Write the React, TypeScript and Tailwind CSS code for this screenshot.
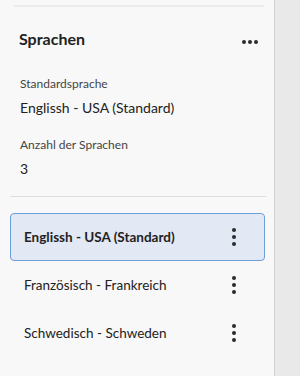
import React from "react";

const Kebab = () => (
  <div className="flex flex-col items-center gap-[3px] w-[10px]">
    <span className="block w-[4px] h-[4px] rounded-full bg-[#2c2c2c]" />
    <span className="block w-[4px] h-[4px] rounded-full bg-[#2c2c2c]" />
    <span className="block w-[4px] h-[4px] rounded-full bg-[#2c2c2c]" />
  </div>
);

export default function App() {
  const font = { fontFamily: "Lato, 'Open Sans', sans-serif" };
  return (
    <div className="w-[300px] h-[376px] flex bg-[#e9e9e9] overflow-hidden" style={font}>
      <div className="w-[275px] h-full bg-[#f8f8f8] border-r border-[#d0d0d0] flex flex-col">
        <div className="h-[5px]" />
        <div className="h-[2px] bg-[#ebebeb] ml-[14px] mr-[10px]" />
        <div className="h-[62px] flex items-center justify-between pl-[19px] pr-[16px] pt-[2px]">
          <span className="text-[16px] font-bold text-[#222]">Sprachen</span>
          <div className="flex gap-[2px] items-center mt-[5px]">
            <span className="block w-[4px] h-[4px] rounded-full bg-[#2c2c2c]" />
            <span className="block w-[4px] h-[4px] rounded-full bg-[#2c2c2c]" />
            <span className="block w-[4px] h-[4px] rounded-full bg-[#2c2c2c]" />
          </div>
        </div>
        <div className="pl-[20px] flex flex-col">
          <div className="h-[16px] mt-[7px] flex items-center text-[12px] text-[#444]">Standardsprache</div>
          <div className="h-[20px] mt-[5px] flex items-center text-[14px] text-[#222]">Englissh - USA (Standard)</div>
          <div className="h-[16px] mt-[20px] flex items-center text-[12px] text-[#444]">Anzahl der Sprachen</div>
          <div className="h-[20px] mt-[5px] flex items-center text-[14px] text-[#222]">3</div>
        </div>
        <div className="h-[1px] mt-[18px] bg-[#dedede] ml-[10px] mr-[8px]" />
        <div className="flex flex-col ml-[10px] mr-[9px] mt-[16px]">
          <div className="h-[48px] flex items-center justify-between pl-[13px] pr-[25px] rounded-[4px] border border-[#6e9ddc] bg-[#e2e8f4]">
            <span className="text-[13.5px] font-bold text-[#222]">Englissh - USA (Standard)</span>
            <Kebab />
          </div>
          <div className="h-[48px] flex items-center justify-between pl-[14px] pr-[26px]">
            <span className="text-[13.5px] text-[#222]">Französisch - Frankreich</span>
            <Kebab />
          </div>
          <div className="h-[48px] flex items-center justify-between pl-[14px] pr-[26px]">
            <span className="text-[13.5px] text-[#222]">Schwedisch - Schweden</span>
            <Kebab />
          </div>
        </div>
      </div>
    </div>
  );
}
